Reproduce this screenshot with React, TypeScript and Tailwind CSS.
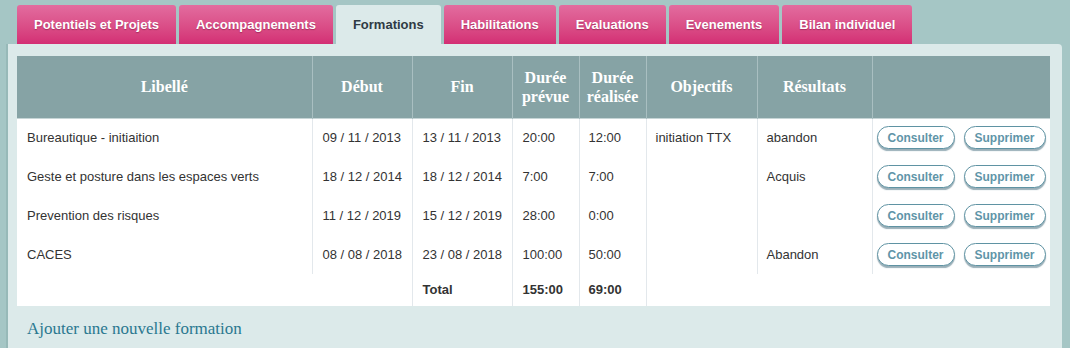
const tabs = [
  "Potentiels et Projets",
  "Accompagnements",
  "Formations",
  "Habilitations",
  "Evaluations",
  "Evenements",
  "Bilan individuel",
];

const rows = [
  { lib: "Bureautique - initiaition", debut: "09 / 11 / 2013", fin: "13 / 11 / 2013", prevue: "20:00", realisee: "12:00", obj: "initiation TTX", res: "abandon" },
  { lib: "Geste et posture dans les espaces verts", debut: "18 / 12 / 2014", fin: "18 / 12 / 2014", prevue: "7:00", realisee: "7:00", obj: "", res: "Acquis" },
  { lib: "Prevention des risques", debut: "11 / 12 / 2019", fin: "15 / 12 / 2019", prevue: "28:00", realisee: "0:00", obj: "", res: "" },
  { lib: "CACES", debut: "08 / 08 / 2018", fin: "23 / 08 / 2018", prevue: "100:00", realisee: "50:00", obj: "", res: "Abandon" },
];

function PillButton({ label }: { label: string }) {
  return (
    <button className="h-[23px] rounded-full border border-[#5f93a3] bg-white px-[10px] text-[12px] font-bold leading-none text-[#5f95a8] shadow-[0_2px_1px_rgba(70,110,125,0.55)]">
      {label}
    </button>
  );
}

const th = "border-l border-[#a9bfc1] px-1 text-center align-middle text-[16px] font-bold leading-[19px] text-white first:border-l-0";
const cell = "border-l border-[#e3e8ec] align-middle first:border-l-0";
const td = cell + " pl-[10px]";
const td9 = cell + " pl-[9px]";

export default function App() {
  return (
    <div
      className="h-[348px] w-[1070px] overflow-hidden bg-[#a5c6c5] pl-[6px] pr-[8px] pt-[5px]"
      style={{ fontFamily: '"Liberation Sans", Arial, sans-serif' }}
    >
      <div className="flex gap-[3px] pl-[11px]">
        {tabs.map((t) =>
          t === "Formations" ? (
            <div key={t} className="flex h-[39px] items-center rounded-t-[3px] bg-[#dceaea] px-[17px] text-[13px] font-bold text-[#2f3a44]">
              {t}
            </div>
          ) : (
            <div
              key={t}
              className="flex h-[39px] items-center rounded-t-[3px] bg-gradient-to-b from-[#e26c9f] to-[#d32e74] px-[17px] text-[13px] font-bold text-white [text-shadow:0_1px_1px_rgba(120,20,60,0.5)]"
            >
              {t}
            </div>
          ),
        )}
      </div>
      <div className="h-[320px] rounded-tr-[4px] border-l-2 border-[#97b9b8] bg-[#dceaea] pl-[9px] pr-[12px] pt-[12px]">
        <table className="w-[1033px] table-fixed border-collapse bg-white text-[13px] text-[#333]">
          <colgroup>
            <col className="w-[295px]" />
            <col className="w-[100px]" />
            <col className="w-[100px]" />
            <col className="w-[67px]" />
            <col className="w-[67px]" />
            <col className="w-[111px]" />
            <col className="w-[115px]" />
            <col className="w-[178px]" />
          </colgroup>
          <thead style={{ fontFamily: '"Liberation Serif", "Times New Roman", serif' }}>
            <tr className="h-[62px] border-b border-[#c6d5d6] bg-[#86a3a5]">
              <th className={th}>Libellé</th>
              <th className={th}>Début</th>
              <th className={th}>Fin</th>
              <th className={th}>Durée prévue</th>
              <th className={th}>Durée réalisée</th>
              <th className={th}>Objectifs</th>
              <th className={th}>Résultats</th>
              <th className={th}></th>
            </tr>
          </thead>
          <tbody>
            {rows.map((r) => (
              <tr key={r.lib} className="h-[39px]">
                <td className={td}>{r.lib}</td>
                <td className={td}>{r.debut}</td>
                <td className={td}>{r.fin}</td>
                <td className={td}>{r.prevue}</td>
                <td className={td9}>{r.realisee}</td>
                <td className={td9}>{r.obj}</td>
                <td className={td9}>{r.res}</td>
                <td className={cell + " pl-[4px]"}>
                  <div className="flex gap-[9px]">
                    <PillButton label="Consulter" />
                    <PillButton label="Supprimer" />
                  </div>
                </td>
              </tr>
            ))}
            <tr className="h-[32px] font-bold">
              <td colSpan={2}></td>
              <td className={td}>Total</td>
              <td className={td}>155:00</td>
              <td className={td9}>69:00</td>
              <td colSpan={3} className={td}></td>
            </tr>
          </tbody>
        </table>
        <div
          className="pl-[10px] pt-[10px] text-[17px] text-[#2a7890]"
          style={{ fontFamily: '"Liberation Serif", "Times New Roman", serif' }}
        >
          Ajouter une nouvelle formation
        </div>
      </div>
    </div>
  );
}
